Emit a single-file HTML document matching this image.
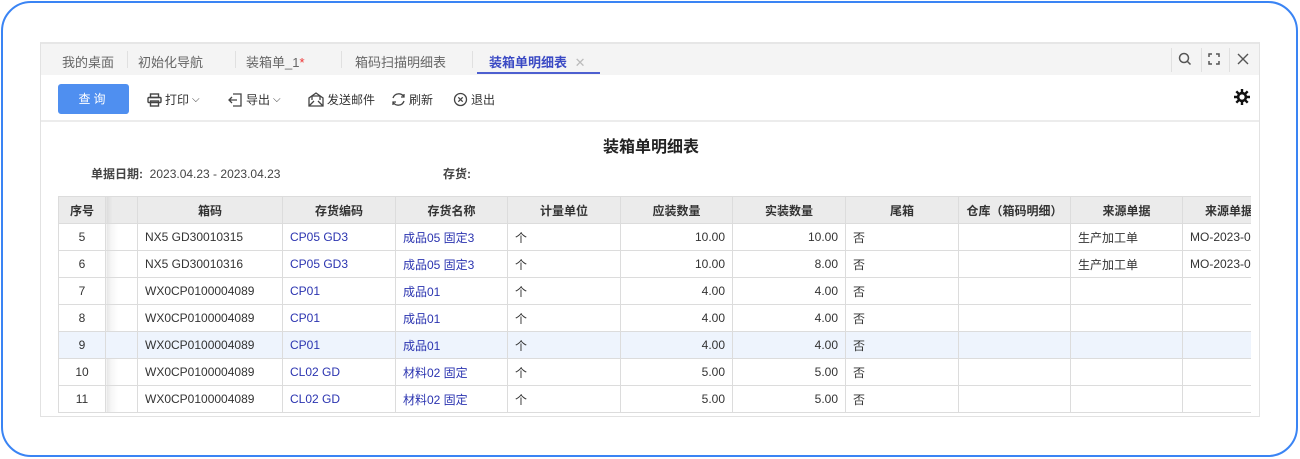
<!DOCTYPE html>
<html><head><meta charset="utf-8"><style>
*{box-sizing:border-box;margin:0;padding:0}
body{width:1300px;height:459px;background:#fff;font-family:"Liberation Sans","Noto Sans CJK SC",sans-serif;position:relative;overflow:hidden;color:#333}
.frame{position:absolute;left:1px;top:1px;width:1297px;height:456px;border:2px solid #3a84f4;border-radius:30px}
.panel{position:absolute;left:40px;top:42px;width:1220px;height:375px;border:1px solid #e2e2e2;border-top:2px solid #e6e6e6;background:#fff;overflow:hidden}
.tabs{position:absolute;left:0;top:0;width:1220px;height:31px;background:#f4f4f4;font-size:13px;color:#666}
.tab{position:absolute;top:8px}
.sep{position:absolute;top:7px;width:1px;height:17px;background:#e0e0e0}
.toolbar{position:absolute;left:0;top:31px;width:1220px;height:47px;background:#fff;border-bottom:2px solid #ececec;font-size:12px;color:#333}
.btn{position:absolute;left:17px;top:9px;width:71px;height:30px;background:#4f8ff0;border-radius:3px;color:#fff;font-size:12px;text-align:center;line-height:30px;letter-spacing:3px}
.ti{position:absolute;top:16px;display:flex;align-items:center;gap:3px}
.title{position:absolute;left:0;width:1220px;top:89px;text-align:center;font-size:16px;font-weight:bold;color:#222}
.meta{position:absolute;top:121px;font-size:12px;color:#444}
.tw{position:absolute;left:17px;top:152px;width:1193px;height:220px;overflow:hidden}
table{border-collapse:collapse;table-layout:fixed;font-size:12px;width:1254px}
td,th{border:1px solid #dcdcdc;height:27px;padding:0 7px;white-space:nowrap;overflow:hidden}
th{background:#ebebeb;font-weight:bold;color:#333;text-align:center}
td.c{text-align:center}
td.r{text-align:right}
td.b{color:#2b34b0}
td.sh{background:linear-gradient(90deg,#e6e6e6 0,#f7f7f7 5px,#fff 12px)}
tr.hl td{background:#eef4fd}
</style></head><body>
<div class="frame"></div>
<div class="panel">
 <div class="tabs">
  <span class="tab" style="left:21px">我的桌面</span><div class="sep" style="left:86px"></div>
  <span class="tab" style="left:97px">初始化导航</span><div class="sep" style="left:194px"></div>
  <span class="tab" style="left:205px">装箱单_1<span style="color:#e33">*</span></span><div class="sep" style="left:300px"></div>
  <span class="tab" style="left:314px">箱码扫描明细表</span><div class="sep" style="left:431px"></div>
  <span class="tab" style="left:448px;color:#3a49c4;font-weight:bold">装箱单明细表 <span style="color:#bbb;font-weight:normal;margin-left:4px">✕</span></span>
  <div style="position:absolute;left:436px;top:28px;width:123px;height:2px;background:#4d5fd0"></div>
  <div class="sep" style="left:1130px;height:24px;top:4px"></div>
  <svg style="position:absolute;left:1137px;top:8px" width="14" height="14" viewBox="0 0 14 14"><circle cx="6" cy="6" r="4.5" fill="none" stroke="#555" stroke-width="1.5"/><path d="M9.5 9.5L12.5 12.5" stroke="#555" stroke-width="1.5"/></svg>
  <div class="sep" style="left:1160px;height:24px;top:4px"></div>
  <svg style="position:absolute;left:1166px;top:8px" width="14" height="14" viewBox="0 0 14 14" fill="none" stroke="#555" stroke-width="1.5"><path d="M2 5V2h3M9 2h3v3M12 9v3H9M5 12H2V9"/></svg>
  <div class="sep" style="left:1188px;height:24px;top:4px"></div>
  <svg style="position:absolute;left:1195px;top:8px" width="14" height="14" viewBox="0 0 14 14" stroke="#555" stroke-width="1.4"><path d="M2 2L12 12M12 2L2 12"/></svg>
 </div>
 <div class="toolbar">
  <div class="btn">查询</div>
  <div class="ti" style="left:106px"><svg width="15" height="14" viewBox="0 0 15 14" fill="none" stroke="#444" stroke-width="1.4"><rect x="3.5" y="1" width="8" height="3.5"/><rect x="1" y="4.5" width="13" height="5" rx="1"/><rect x="3.5" y="8" width="8" height="5"/></svg>打印<span style="font-size:10px">⌵</span></div>
  <div class="ti" style="left:187px"><svg width="15" height="14" viewBox="0 0 15 14" fill="none" stroke="#444" stroke-width="1.3"><path d="M5 1h8v12H5M9 7H1M4 4L1 7l3 3"/></svg>导出<span style="font-size:10px">⌵</span></div>
  <div class="ti" style="left:267px"><svg width="16" height="15" viewBox="0 0 16 15" fill="none" stroke="#444" stroke-width="1.3"><path d="M1 6v8h14V6L8 1z"/><path d="M1 14l5-5M15 14l-5-5M4 4v4M12 4v4M4 4h8"/></svg>发送邮件</div>
  <div class="ti" style="left:350px"><svg width="15" height="15" viewBox="0 0 15 15" fill="none" stroke="#444" stroke-width="1.3"><path d="M2 6A6 6 0 0 1 13 5M13 9A6 6 0 0 1 2 10"/><path d="M13 2v3h-3M2 13v-3h3"/></svg>刷新</div>
  <div class="ti" style="left:412px"><svg width="15" height="15" viewBox="0 0 15 15" fill="none" stroke="#444" stroke-width="1.3"><circle cx="7.5" cy="7.5" r="6"/><path d="M5.3 5.3l4.4 4.4M9.7 5.3l-4.4 4.4"/></svg>退出</div>
  <svg style="position:absolute;left:1192px;top:13px" width="18" height="18" viewBox="0 0 18 18"><g stroke="#111" stroke-width="2.4"><path d="M9 1v16M1 9h16M3.3 3.3l11.4 11.4M14.7 3.3L3.3 14.7"/></g><circle cx="9" cy="9" r="5.2" fill="#111"/><circle cx="9" cy="9" r="2.6" fill="#fff"/></svg>
 </div>
 <div class="title">装箱单明细表</div>
 <div class="meta" style="left:50px"><b style="font-weight:bold">单据日期:</b>&nbsp; 2023.04.23 - 2023.04.23</div>
 <div class="meta" style="left:402px;font-weight:bold">存货:</div>
 <div class="tw">
 <table>
  <colgroup><col style="width:47px"><col style="width:32px"><col style="width:145px"><col style="width:113px"><col style="width:112px"><col style="width:113px"><col style="width:112px"><col style="width:113px"><col style="width:113px"><col style="width:112px"><col style="width:112px"><col style="width:130px"></colgroup>
  <tr><th>序号</th><th style="background:linear-gradient(90deg,#dcdcdc 0,#ebebeb 6px)"></th><th>箱码</th><th>存货编码</th><th>存货名称</th><th>计量单位</th><th>应装数量</th><th>实装数量</th><th>尾箱</th><th>仓库（箱码明细）</th><th>来源单据</th><th style="text-align:left;padding-left:22px">来源单据</th></tr>
  <tr><td class="c">5</td><td class="sh"></td><td>NX5 GD30010315</td><td class="b">CP05 GD3</td><td class="b">成品05 固定3</td><td>个</td><td class="r">10.00</td><td class="r">10.00</td><td>否</td><td></td><td>生产加工单</td><td>MO-2023-0</td></tr>
  <tr><td class="c">6</td><td class="sh"></td><td>NX5 GD30010316</td><td class="b">CP05 GD3</td><td class="b">成品05 固定3</td><td>个</td><td class="r">10.00</td><td class="r">8.00</td><td>否</td><td></td><td>生产加工单</td><td>MO-2023-0</td></tr>
  <tr><td class="c">7</td><td class="sh"></td><td>WX0CP0100004089</td><td class="b">CP01</td><td class="b">成品01</td><td>个</td><td class="r">4.00</td><td class="r">4.00</td><td>否</td><td></td><td></td><td></td></tr>
  <tr><td class="c">8</td><td class="sh"></td><td>WX0CP0100004089</td><td class="b">CP01</td><td class="b">成品01</td><td>个</td><td class="r">4.00</td><td class="r">4.00</td><td>否</td><td></td><td></td><td></td></tr>
  <tr class="hl"><td class="c">9</td><td class="sh"></td><td>WX0CP0100004089</td><td class="b">CP01</td><td class="b">成品01</td><td>个</td><td class="r">4.00</td><td class="r">4.00</td><td>否</td><td></td><td></td><td></td></tr>
  <tr><td class="c">10</td><td class="sh"></td><td>WX0CP0100004089</td><td class="b">CL02 GD</td><td class="b">材料02 固定</td><td>个</td><td class="r">5.00</td><td class="r">5.00</td><td>否</td><td></td><td></td><td></td></tr>
  <tr><td class="c">11</td><td class="sh"></td><td>WX0CP0100004089</td><td class="b">CL02 GD</td><td class="b">材料02 固定</td><td>个</td><td class="r">5.00</td><td class="r">5.00</td><td>否</td><td></td><td></td><td></td></tr>
 </table>
 </div>
</div>
</body></html>
